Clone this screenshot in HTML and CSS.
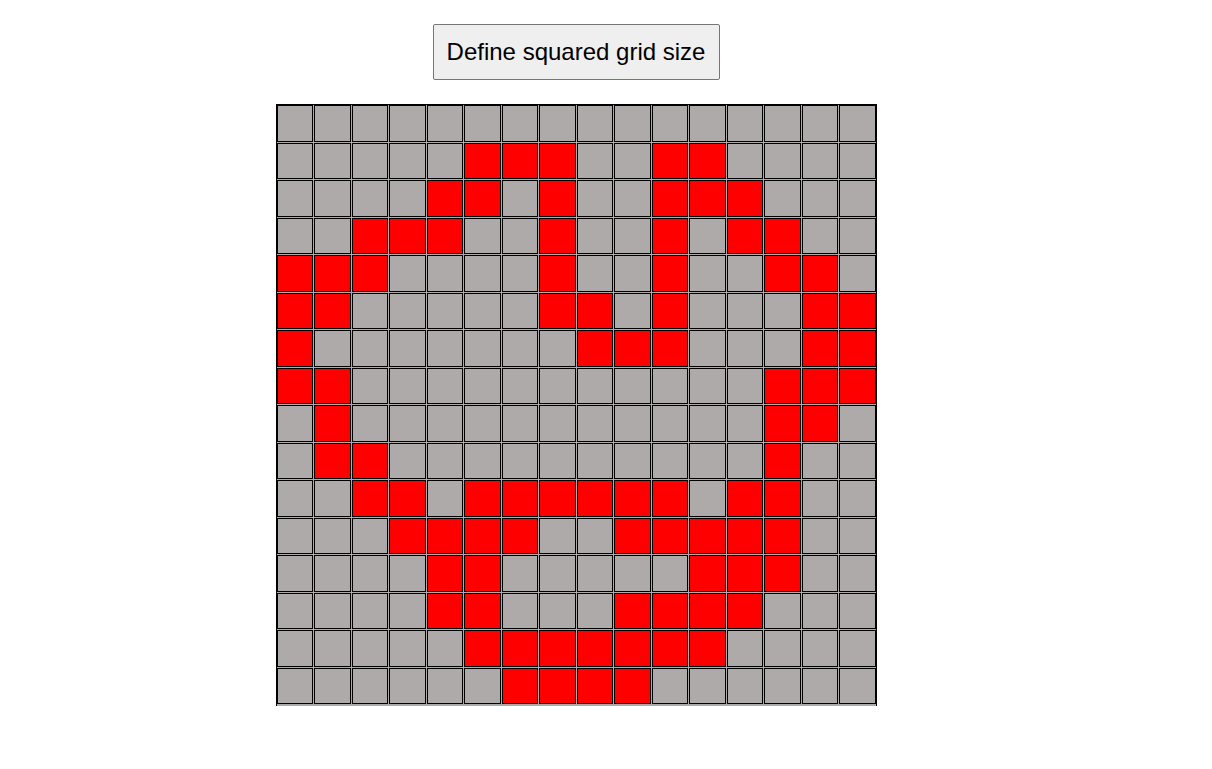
FILE: index.html
```html
<!DOCTYPE html>
<html lang="en">
<head>
<meta charset="utf-8">
<title>Etch a Sketch</title>
<link rel="stylesheet" href="styles.css">
</head>
<body>
<main class="page">
  <button class="size-btn" type="button">Define squared grid size</button>
  <div class="grid">
    <div class="cell"></div><div class="cell"></div><div class="cell"></div><div class="cell"></div><div class="cell"></div><div class="cell"></div><div class="cell"></div><div class="cell"></div><div class="cell"></div><div class="cell"></div><div class="cell"></div><div class="cell"></div><div class="cell"></div><div class="cell"></div><div class="cell"></div><div class="cell"></div>
    <div class="cell"></div><div class="cell"></div><div class="cell"></div><div class="cell"></div><div class="cell"></div><div class="cell on"></div><div class="cell on"></div><div class="cell on"></div><div class="cell"></div><div class="cell"></div><div class="cell on"></div><div class="cell on"></div><div class="cell"></div><div class="cell"></div><div class="cell"></div><div class="cell"></div>
    <div class="cell"></div><div class="cell"></div><div class="cell"></div><div class="cell"></div><div class="cell on"></div><div class="cell on"></div><div class="cell"></div><div class="cell on"></div><div class="cell"></div><div class="cell"></div><div class="cell on"></div><div class="cell on"></div><div class="cell on"></div><div class="cell"></div><div class="cell"></div><div class="cell"></div>
    <div class="cell"></div><div class="cell"></div><div class="cell on"></div><div class="cell on"></div><div class="cell on"></div><div class="cell"></div><div class="cell"></div><div class="cell on"></div><div class="cell"></div><div class="cell"></div><div class="cell on"></div><div class="cell"></div><div class="cell on"></div><div class="cell on"></div><div class="cell"></div><div class="cell"></div>
    <div class="cell on"></div><div class="cell on"></div><div class="cell on"></div><div class="cell"></div><div class="cell"></div><div class="cell"></div><div class="cell"></div><div class="cell on"></div><div class="cell"></div><div class="cell"></div><div class="cell on"></div><div class="cell"></div><div class="cell"></div><div class="cell on"></div><div class="cell on"></div><div class="cell"></div>
    <div class="cell on"></div><div class="cell on"></div><div class="cell"></div><div class="cell"></div><div class="cell"></div><div class="cell"></div><div class="cell"></div><div class="cell on"></div><div class="cell on"></div><div class="cell"></div><div class="cell on"></div><div class="cell"></div><div class="cell"></div><div class="cell"></div><div class="cell on"></div><div class="cell on"></div>
    <div class="cell on"></div><div class="cell"></div><div class="cell"></div><div class="cell"></div><div class="cell"></div><div class="cell"></div><div class="cell"></div><div class="cell"></div><div class="cell on"></div><div class="cell on"></div><div class="cell on"></div><div class="cell"></div><div class="cell"></div><div class="cell"></div><div class="cell on"></div><div class="cell on"></div>
    <div class="cell on"></div><div class="cell on"></div><div class="cell"></div><div class="cell"></div><div class="cell"></div><div class="cell"></div><div class="cell"></div><div class="cell"></div><div class="cell"></div><div class="cell"></div><div class="cell"></div><div class="cell"></div><div class="cell"></div><div class="cell on"></div><div class="cell on"></div><div class="cell on"></div>
    <div class="cell"></div><div class="cell on"></div><div class="cell"></div><div class="cell"></div><div class="cell"></div><div class="cell"></div><div class="cell"></div><div class="cell"></div><div class="cell"></div><div class="cell"></div><div class="cell"></div><div class="cell"></div><div class="cell"></div><div class="cell on"></div><div class="cell on"></div><div class="cell"></div>
    <div class="cell"></div><div class="cell on"></div><div class="cell on"></div><div class="cell"></div><div class="cell"></div><div class="cell"></div><div class="cell"></div><div class="cell"></div><div class="cell"></div><div class="cell"></div><div class="cell"></div><div class="cell"></div><div class="cell"></div><div class="cell on"></div><div class="cell"></div><div class="cell"></div>
    <div class="cell"></div><div class="cell"></div><div class="cell on"></div><div class="cell on"></div><div class="cell"></div><div class="cell on"></div><div class="cell on"></div><div class="cell on"></div><div class="cell on"></div><div class="cell on"></div><div class="cell on"></div><div class="cell"></div><div class="cell on"></div><div class="cell on"></div><div class="cell"></div><div class="cell"></div>
    <div class="cell"></div><div class="cell"></div><div class="cell"></div><div class="cell on"></div><div class="cell on"></div><div class="cell on"></div><div class="cell on"></div><div class="cell"></div><div class="cell"></div><div class="cell on"></div><div class="cell on"></div><div class="cell on"></div><div class="cell on"></div><div class="cell on"></div><div class="cell"></div><div class="cell"></div>
    <div class="cell"></div><div class="cell"></div><div class="cell"></div><div class="cell"></div><div class="cell on"></div><div class="cell on"></div><div class="cell"></div><div class="cell"></div><div class="cell"></div><div class="cell"></div><div class="cell"></div><div class="cell on"></div><div class="cell on"></div><div class="cell on"></div><div class="cell"></div><div class="cell"></div>
    <div class="cell"></div><div class="cell"></div><div class="cell"></div><div class="cell"></div><div class="cell on"></div><div class="cell on"></div><div class="cell"></div><div class="cell"></div><div class="cell"></div><div class="cell on"></div><div class="cell on"></div><div class="cell on"></div><div class="cell on"></div><div class="cell"></div><div class="cell"></div><div class="cell"></div>
    <div class="cell"></div><div class="cell"></div><div class="cell"></div><div class="cell"></div><div class="cell"></div><div class="cell on"></div><div class="cell on"></div><div class="cell on"></div><div class="cell on"></div><div class="cell on"></div><div class="cell on"></div><div class="cell on"></div><div class="cell"></div><div class="cell"></div><div class="cell"></div><div class="cell"></div>
    <div class="cell"></div><div class="cell"></div><div class="cell"></div><div class="cell"></div><div class="cell"></div><div class="cell"></div><div class="cell on"></div><div class="cell on"></div><div class="cell on"></div><div class="cell on"></div><div class="cell"></div><div class="cell"></div><div class="cell"></div><div class="cell"></div><div class="cell"></div><div class="cell"></div>
  </div>
</main>
</body>
</html>
```

FILE: styles.css
```css
html, body {
  margin: 0;
  padding: 0;
  background: #ffffff;
}

.page {
  width: 1152px;
  padding-top: 24px;
  display: flex;
  flex-direction: column;
  align-items: center;
  gap: 24px;
}

.size-btn {
  font-family: "Liberation Sans", Arial, sans-serif;
  font-size: 24px;
  line-height: 28px;
  color: #000;
  background: #efefef;
  border: 1px solid #767676;
  border-radius: 2px;
  padding: 13px 12px;
  width: 287px;
  height: 56px;
  box-sizing: border-box;
  white-space: nowrap;
}

.grid {
  width: 601px;
  box-sizing: border-box;
  border: 1px solid #000;
  border-bottom: none;
  padding-bottom: 2px;
  background: #afaaaa;
  display: grid;
  grid-template-columns: repeat(16, 1fr);
  grid-auto-rows: 36.5px;
  gap: 1px;
}

.cell {
  border: 1px solid #000;
  background: #afaaaa;
}

.cell.on {
  background: #ff0000;
}
```
